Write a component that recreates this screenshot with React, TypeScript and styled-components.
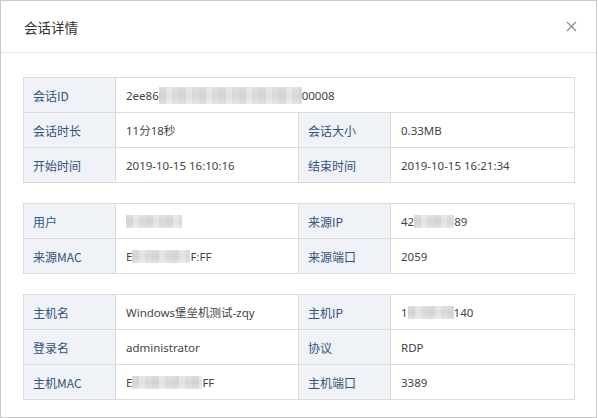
import React from 'react'
import styled, { createGlobalStyle } from 'styled-components'

type Cell = {
    label: string
    value: React.ReactNode
    span?: boolean
}

const GlobalStyle = createGlobalStyle`
    html, body {
        margin: 0;
        padding: 0;
        background: #fff;
    }
    body {
        font-family: "Noto Sans", "Noto Sans CJK SC", sans-serif;
    }
`

const StyledModal = styled.div`
    box-sizing: border-box;
    width: 597px;
    height: 418px;
    border: 1px solid #c9c9c9;
    background: #fff;
    display: flex;
    flex-direction: column;
`

const StyledHeader = styled.div`
    height: 51px;
    border-bottom: 1px solid #e6e6e6;
    display: flex;
    align-items: center;
    justify-content: space-between;
    padding: 0 19px 0 23px;
    flex-shrink: 0;
`

const StyledTitle = styled.h3`
    margin: 0;
    font-size: 13.5px;
    font-weight: normal;
    color: #333;
    font-family: "Noto Sans CJK SC", sans-serif;
`

const StyledClose = styled.button`
    width: 12px;
    height: 12px;
    padding: 0;
    border: none;
    background: none;
    display: flex;
    align-items: center;
    justify-content: center;
    cursor: pointer;
`

const StyledBody = styled.div`
    padding: 24px 21px 0 22px;
    display: flex;
    flex-direction: column;
    gap: 20px;
`

const StyledGrid = styled.div`
    display: grid;
    grid-template-columns: 92px 183px 92px 1fr;
    border-top: 1px solid #dcdcdc;
    border-left: 1px solid #dcdcdc;
`

const StyledLabel = styled.div`
    box-sizing: border-box;
    height: 35px;
    display: flex;
    align-items: center;
    padding-left: 9px;
    background: #eff2f7;
    color: #34527c;
    font-size: 12px;
    font-family: "Noto Sans CJK SC", sans-serif;
    border-right: 1px solid #dcdcdc;
    border-bottom: 1px solid #dcdcdc;
`

const StyledValue = styled.div<{ $span?: boolean }>`
    box-sizing: border-box;
    height: 35px;
    display: flex;
    align-items: center;
    padding-left: 10px;
    color: #444;
    font-size: 11.5px;
    font-family: "Noto Sans", "Noto Sans CJK SC", sans-serif;
    white-space: nowrap;
    border-right: 1px solid #dcdcdc;
    border-bottom: 1px solid #dcdcdc;
    grid-column: ${p => (p.$span ? 'span 3' : 'span 1')};
`

const StyledMask = styled.span<{ $w: number; $h?: number }>`
    display: inline-block;
    width: ${p => p.$w}px;
    height: ${p => p.$h ?? 17}px;
    background:
        repeating-linear-gradient(90deg, rgba(0,0,0,0.035) 0 7px, rgba(255,255,255,0.2) 7px 13px, rgba(0,0,0,0.015) 13px 20px),
        linear-gradient(180deg, #e4e4e4 0%, #dadada 50%, #e8e8e8 100%);
`

const CloseIcon = () => (
    <svg width="11" height="11" viewBox="0 0 11 11">
        <path d="M1 1 L10 10 M10 1 L1 10" stroke="#8c8c8c" strokeWidth="1.2" fill="none" />
    </svg>
)

const sections: Cell[][] = [
    [
        { label: '会话ID', value: <>2ee86<StyledMask $w={143} />00008</>, span: true },
        { label: '会话时长', value: '11分18秒' },
        { label: '会话大小', value: '0.33MB' },
        { label: '开始时间', value: '2019-10-15 16:10:16' },
        { label: '结束时间', value: '2019-10-15 16:21:34' },
    ],
    [
        { label: '用户', value: <StyledMask $w={56} $h={13} /> },
        { label: '来源IP', value: <>42<StyledMask $w={40} $h={13} />89</> },
        { label: '来源MAC', value: <>E<StyledMask $w={58} $h={13} />F:FF</> },
        { label: '来源端口', value: '2059' },
    ],
    [
        { label: '主机名', value: 'Windows堡垒机测试-zqy' },
        { label: '主机IP', value: <>1<StyledMask $w={46} $h={13} />140</> },
        { label: '登录名', value: 'administrator' },
        { label: '协议', value: 'RDP' },
        { label: '主机MAC', value: <>E<StyledMask $w={70} $h={13} />FF</> },
        { label: '主机端口', value: '3389' },
    ],
]

const App = () => {
    return (
        <>
            <GlobalStyle />
            <StyledModal>
                <StyledHeader>
                    <StyledTitle>会话详情</StyledTitle>
                    <StyledClose aria-label="close">
                        <CloseIcon />
                    </StyledClose>
                </StyledHeader>
                <StyledBody>
                    {sections.map((cells, i) => (
                        <StyledGrid key={i}>
                            {cells.map(cell => (
                                <React.Fragment key={cell.label}>
                                    <StyledLabel>{cell.label}</StyledLabel>
                                    <StyledValue $span={cell.span}>{cell.value}</StyledValue>
                                </React.Fragment>
                            ))}
                        </StyledGrid>
                    ))}
                </StyledBody>
            </StyledModal>
        </>
    )
}

export default App
